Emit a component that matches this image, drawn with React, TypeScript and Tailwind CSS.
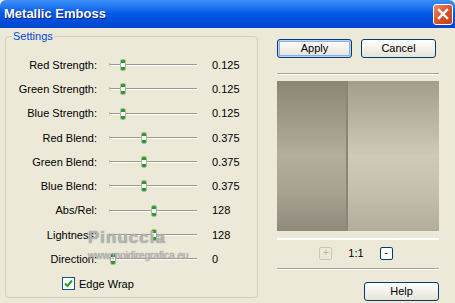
import React from "react";

const rows = [
  { label: "Red Strength:", value: "0.125", pos: 11 },
  { label: "Green Strength:", value: "0.125", pos: 11 },
  { label: "Blue Strength:", value: "0.125", pos: 11 },
  { label: "Red Blend:", value: "0.375", pos: 32 },
  { label: "Green Blend:", value: "0.375", pos: 32 },
  { label: "Blue Blend:", value: "0.375", pos: 32 },
  { label: "Abs/Rel:", value: "128", pos: 42 },
  { label: "Lightness:", value: "128", pos: 42 },
  { label: "Direction:", value: "0", pos: 1 },
];

function Slider({ pos }: { pos: number }) {
  return (
    <div className="relative w-[88px] h-[12px]">
      <div className="absolute left-0 right-0 top-[5px] h-[1px] bg-[#9d9a8c]" />
      <div className="absolute left-0 right-0 top-[6px] h-[1px] bg-white" />
      <div className="absolute left-0 top-[4px] h-[3px] w-[1px] bg-[#c9c6b8]" />
      <div
        className="absolute top-0 w-[6px] h-[12px] rounded-[2px] border border-[#b5b3a7] bg-white flex flex-col justify-between overflow-hidden"
        style={{ left: pos }}
      >
        <div className="h-[3px] bg-[#21a121]" />
        <div className="h-[3px] bg-[#21a121]" />
      </div>
    </div>
  );
}

function XpButton({ label, focus }: { label: string; focus?: boolean }) {
  return (
    <button
      className={`w-[75px] h-[19px] rounded-[3px] border border-[#003c74] bg-gradient-to-b from-white to-[#e6e3d6] text-[11px] text-black ${
        focus ? "shadow-[inset_0_0_0_1px_#bcd4f6,inset_0_0_0_2px_#89ade4]" : ""
      }`}
    >
      {label}
    </button>
  );
}

export default function App() {
  return (
    <div
      className="w-[455px] h-[303px] bg-[#ece9d8] overflow-hidden relative"
      style={{ fontFamily: '"Liberation Sans", Arial, sans-serif' }}
    >
      {/* title bar */}
      <div className="h-[28px] flex items-center justify-between pl-[4px] pr-[1px] bg-gradient-to-b from-[#3d8ff6] via-[#0058e6] to-[#0045cf] rounded-t-[6px]">
        <span className="text-white font-bold text-[13px] [text-shadow:1px_1px_0_#0a1e84]">Metallic Emboss</span>
        <div className="w-[20px] h-[21px] mr-[1px] rounded-[3px] border border-white bg-gradient-to-br from-[#e88a70] via-[#d9532d] to-[#c23c17] flex items-center justify-center">
          <svg width="12" height="12" viewBox="0 0 12 12">
            <path d="M2 2 L10 10 M10 2 L2 10" stroke="white" strokeWidth="2.4" strokeLinecap="square" />
          </svg>
        </div>
      </div>

      <div className="flex pl-[5px] pt-[2px]">
        {/* settings group */}
        <fieldset className="w-[253px] h-[268px] border border-[#d0d0bf] rounded-[4px] px-0 pt-[11px] m-0">
          <legend className="ml-[6px] px-[1px] text-[11px] text-[#0046d5] leading-[12px]">Settings</legend>
          <div className="flex flex-col">
            {rows.map((r) => (
              <div key={r.label} className="flex items-center h-[24.25px]">
                <div className="w-[91px] text-right text-[11px] text-black">{r.label}</div>
                <div className="ml-[12px]">
                  <Slider pos={r.pos} />
                </div>
                <div className="ml-[15px] text-[11px] text-black">{r.value}</div>
              </div>
            ))}
            <div className="flex items-center h-[25px] pl-[56px]">
              <div className="w-[13px] h-[13px] border border-[#1c5180] bg-white flex items-center justify-center">
                <svg width="9" height="9" viewBox="0 0 9 9">
                  <path d="M1 4.5 L3.5 7 L8 1.5" stroke="#21a121" strokeWidth="2" fill="none" />
                </svg>
              </div>
              <span className="ml-[4px] text-[11px] text-black">Edge Wrap</span>
            </div>
          </div>
        </fieldset>

        {/* right column */}
        <div className="ml-[19px] flex flex-col w-[162px] pt-[9px]">
          <div className="flex gap-[9px]">
            <XpButton label="Apply" focus />
            <XpButton label="Cancel" />
          </div>
          <div className="mt-[15px] h-[1px] bg-[#a7a591] border-b border-white box-content" />
          <div className="mt-[6px] h-[150px] flex">
            <div className="w-[69px] bg-[linear-gradient(to_bottom,#8b8575_0%,#a29d8d_30%,#b2ad9d_50%,#a6a191_75%,#8f8a7c_100%)]" />
            <div className="w-[2px] bg-[#8a8576]" />
            <div className="flex-1 bg-[linear-gradient(to_bottom,#a39e8c_0%,#bdb7a5_30%,#cfc9b7_50%,#c4bead_75%,#b2ac9b_100%)]" />
          </div>
          <div className="mt-[7px] h-[2px] bg-white" />
          <div className="mt-[5px] flex items-center justify-center gap-[16px] pr-[4px]">
            <div className="w-[13px] h-[13px] border border-[#c9c7ba] rounded-[2px] flex items-center justify-center text-[10px] leading-none text-[#b8b6a8]">
              +
            </div>
            <span className="text-[11px] text-black">1:1</span>
            <div className="w-[13px] h-[13px] border border-[#003c74] rounded-[2px] bg-white flex items-center justify-center text-[10px] leading-none text-black">
              -
            </div>
          </div>
          <div className="mt-[6px] h-[1px] bg-[#a7a591] border-b border-white box-content" />
          <div className="mt-[12px] flex justify-end">
            <XpButton label="Help" />
          </div>
        </div>
      </div>

      {/* watermark */}
      <div className="absolute left-[88px] top-[225px] pointer-events-none">
        <div className="text-[17px] font-bold text-[#c8c8c8]/80 [text-shadow:0_0_1px_#666] tracking-[1px]">Pinuccia</div>
        <div className="text-[10px] text-[#c8c8c8]/80 [text-shadow:0_0_1px_#666] -mt-[3px]">www.moidiregrafica.eu</div>
      </div>
    </div>
  );
}
